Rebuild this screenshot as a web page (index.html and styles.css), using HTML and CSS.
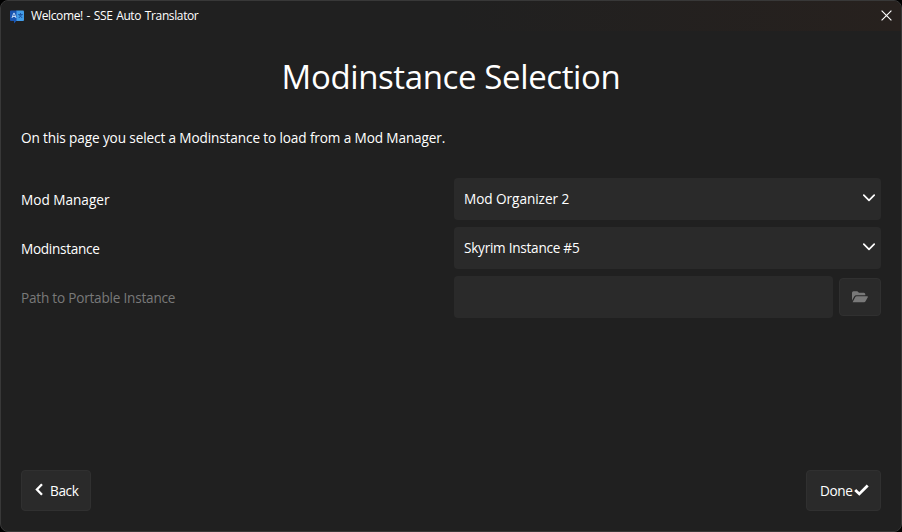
FILE: index.html
```html
<!DOCTYPE html>
<html lang="en">
<head>
<meta charset="utf-8">
<title>Welcome! - SSE Auto Translator</title>
<link rel="stylesheet" href="styles.css">
</head>
<body>
<div class="window">
  <header class="titlebar">
    <svg class="app-icon" width="14" height="14" viewBox="0 0 14 14">
      <path d="M1 0.500h6v10.500H6.200L4 13.500V11H1a1 1 0 0 1-1-1v-8.500a1 1 0 0 1 1-1z" fill="#1a55b0"/>
      <path d="M6.500 0.500h6.500a1 1 0 0 1 1 1v8.500a1 1 0 0 1-1 1H6.500z" fill="#429ce8"/>
      <path d="M2 8l1.700-4.800h.6l1.700 4.800M2.800 6.500h2.400" fill="none" stroke="#d5e6fa" stroke-width=".9"/>
      <path d="M8.200 4.600h4.600M10.500 3v1.600M8.800 8l3-3.300M9.200 4.800l3 3.200" fill="none" stroke="#174e9c" stroke-width=".9"/>
    </svg>
    <span class="caption">Welcome! - SSE Auto Translator</span>
    <svg class="close" width="11" height="11" viewBox="0 0 11 11"><path d="M.6.6l9.800 9.800M10.400.6L.6 10.400" fill="none" stroke="#fff" stroke-width="1.150"/></svg>
  </header>
  <main class="page">
    <h1 class="title">Modinstance Selection</h1>
    <p class="intro">On this page you select a Modinstance to load from a Mod Manager.</p>
    <div class="form">
      <div class="row">
        <span class="label label-manager">Mod Manager</span>
        <div class="field"><span class="value-manager">Mod Organizer 2</span><svg class="chevron" width="12" height="8" viewBox="0 0 12 8"><path d="M.8 1.100L6 6.300l5.200-5.200" fill="none" stroke="#fff" stroke-width="1.700" stroke-linecap="round" stroke-linejoin="round"/></svg></div>
      </div>
      <div class="row">
        <span class="label label-instance">Modinstance</span>
        <div class="field"><span class="value-instance">Skyrim Instance #5</span><svg class="chevron" width="12" height="8" viewBox="0 0 12 8"><path d="M.8 1.100L6 6.300l5.200-5.200" fill="none" stroke="#fff" stroke-width="1.700" stroke-linecap="round" stroke-linejoin="round"/></svg></div>
      </div>
      <div class="row disabled">
        <span class="label label-path">Path to Portable Instance</span>
        <div class="path">
          <div class="field"></div>
          <div class="button browse"><svg width="16" height="12" viewBox="0 0 16 12"><path d="M0 9.600V1.700A1.500 1.500 0 0 1 1.500.2h3.800l1.700 1.600h4.800a1.500 1.500 0 0 1 1.500 1.500v.9H4.500A2.600 2.600 0 0 0 2.200 5.500z" fill="#797979"/><path d="M.6 11.300l2.700-5.200a1.500 1.500 0 0 1 1.300-.8h10.700a.6.600 0 0 1 .5.900l-2.400 4.400a1.500 1.500 0 0 1-1.300.7z" fill="#797979"/></svg></div>
        </div>
      </div>
    </div>
    <footer class="actions">
      <div class="button back"><svg width="8" height="13" viewBox="0 0 8 13"><path d="M7 1.200L1.900 6.500 7 11.800" fill="none" stroke="#fff" stroke-width="2.300"/></svg><span>Back</span></div>
      <div class="button done"><span>Done</span><svg width="15" height="12" viewBox="0 0 15 12"><path d="M1.200 6L5.300 9.900 13.700 1.500" fill="none" stroke="#fff" stroke-width="2.800"/></svg></div>
    </footer>
  </main>
</div>
</body>
</html>
```
FILE: styles.css
```css
* { box-sizing: border-box; }
body {
  margin: 0;
  background: #000;
  color: #fff;
  font: 13.6px/20px "Open Sans", "Noto Sans", sans-serif;
  white-space: nowrap;
}
.window {
  width: 902px;
  height: 532px;
  display: flex;
  flex-direction: column;
  border: 1px solid #383838;
  border-radius: 8px;
  background: #202020;
  overflow: hidden;
}
.titlebar {
  height: 30px;
  flex: none;
  display: flex;
  align-items: center;
  padding: 0 9.5px 0 9px;
  background: linear-gradient(90deg, #202020 50%, #27211e);
}
.app-icon { margin-top: 1px; }
.caption { margin-left: 7px; font-size: 12px; letter-spacing: -0.38px; word-spacing: 1px; }
.close { margin-left: auto; margin-top: -1px; }
.page {
  flex: 1;
  display: flex;
  flex-direction: column;
  padding: 0 20px 20px;
}
.title {
  margin: 20px 0 0;
  height: 50px;
  text-align: center;
  font-size: 33px;
  line-height: 51px;
  font-weight: 400;
  letter-spacing: -0.38px;
}
.intro { margin: 27px 0 0; letter-spacing: -0.12px; }
.form {
  margin-top: 30px;
  display: flex;
  flex-direction: column;
  gap: 7px;
}
.row { display: grid; grid-template-columns: 433px 427px; height: 42px; align-items: center; }
.label { padding-top: 1px; }
.label-instance { letter-spacing: -0.3px; }
.label-path { letter-spacing: -0.22px; }
.value-manager { letter-spacing: -0.05px; }
.value-instance { letter-spacing: -0.26px; }
.disabled .label { color: #797979; }
.field {
  flex: 1;
  height: 42px;
  display: flex;
  align-items: center;
  justify-content: space-between;
  padding: 0 6px 0 10px;
  border-radius: 4px;
  background: #2a2a2a;
}
.chevron { margin-top: -2px; }
.path { display: flex; align-items: center; gap: 6px; }
.button {
  display: flex;
  align-items: center;
  border: 1px solid #303030;
  border-radius: 4px;
  background: #2a2a2a;
}
.browse { width: 42px; height: 38px; justify-content: center; }
.actions { margin-top: auto; display: flex; justify-content: space-between; }
.actions .button { height: 41px; letter-spacing: -0.4px; }
.back { width: 70px; padding-left: 13px; gap: 7px; }
.done { width: 75px; padding-left: 13px; gap: 2px; }
.actions svg { margin-top: -2px; }
.actions span { margin-top: 1px; }
```
